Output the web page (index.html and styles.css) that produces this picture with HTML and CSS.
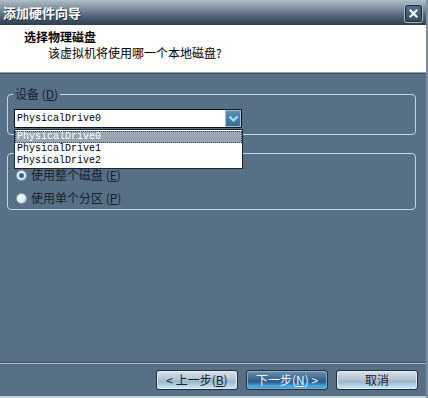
FILE: index.html
```html
<!DOCTYPE html>
<html lang="zh-CN">
<head>
<meta charset="utf-8">
<title>添加硬件向导</title>
<link rel="stylesheet" href="styles.css">
</head>
<body>
<div class="window">
  <div class="titlebar">
    <span class="title">添加硬件向导</span>
    <span class="close">
      <svg width="11" height="11" viewBox="0 0 11 11"><path d="M2.5 2.5 L8.5 8.5 M8.5 2.5 L2.5 8.5" stroke="#ffffff" stroke-width="2.2" stroke-linecap="square"/></svg>
    </span>
  </div>
  <div class="header">
    <div class="h-title">选择物理磁盘</div>
    <div class="h-sub">该虚拟机将使用哪一个本地磁盘?</div>
  </div>
  <div class="content">
    <fieldset class="group group-device">
      <legend class="legend">设备 (<u>D</u>)</legend>
      <div class="combo">
        <span class="combo-text">PhysicalDrive0</span>
        <span class="combo-btn">
          <svg width="13" height="13" viewBox="0 0 13 13"><path d="M2.5 4.5 L6.5 8.5 L10.5 4.5" fill="none" stroke="#9fe4ff" stroke-width="2.2"/></svg>
        </span>
        <ul class="dropdown">
          <li class="item selected">PhysicalDrive0</li>
          <li class="item">PhysicalDrive1</li>
          <li class="item">PhysicalDrive2</li>
        </ul>
      </div>
    </fieldset>
    <fieldset class="group group-part">
      <div class="radio-row"><span class="radio checked"></span><span class="radio-label">使用整个磁盘 (<u>E</u>)</span></div>
      <div class="radio-row"><span class="radio"></span><span class="radio-label">使用单个分区 (<u>P</u>)</span></div>
    </fieldset>
  </div>
  <div class="footer">
    <button class="btn">&lt; 上一步(<u>B</u>)</button>
    <button class="btn btn-default">下一步(<u>N</u>) &gt;</button>
    <button class="btn">取消</button>
  </div>
</div>
</body>
</html>
```
FILE: styles.css
```css
html, body {
  margin: 0;
  padding: 0;
}
body {
  width: 428px;
  height: 398px;
  overflow: hidden;
  font-family: "Noto Sans CJK SC", "Liberation Sans", sans-serif;
  font-size: 12px;
  color: #15202c;
}
.window {
  width: 428px;
  height: 398px;
  display: flex;
  flex-direction: column;
  background: #587086;
  box-sizing: border-box;
  border-right: 2px solid #7e8e9c;
}
.titlebar {
  height: 25px;
  flex: none;
  display: flex;
  align-items: center;
  justify-content: space-between;
  padding: 0 3px 0 3px;
  background: linear-gradient(#b3bec7 0%, #8b9cab 25%, #5d7183 55%, #3a4d5e 85%, #2e3f4f 100%);
}
.title {
  font-size: 13px;
  font-weight: bold;
  color: #ffffff;
  line-height: 16px;
  text-shadow: 1px 1px 0 #24323f;
}
.close {
  width: 17px;
  height: 17px;
  margin-top: 1px;
  display: flex;
  align-items: center;
  justify-content: center;
  border: 1px solid #a9bccb;
  border-radius: 3px;
  background: linear-gradient(#5a7286, #34495c);
  box-shadow: inset 0 0 0 1px #1c2b38;
}
.header {
  height: 47px;
  flex: none;
  background: #ffffff;
  border-bottom: 1px solid #9aa6b0;
  box-shadow: 0 1px 0 #3b4f61;
  margin-bottom: 1px;
  color: #000;
}
.h-title {
  font-weight: bold;
  padding: 4px 0 0 24px;
  line-height: 16px;
}
.h-sub {
  padding: 0 0 0 48px;
  line-height: 16px;
}
.content {
  flex: 1;
  padding: 13px 10px 0 7px;
}
.group {
  margin: 0;
  border: 1px solid #bcd8ef;
  border-radius: 4px;
  min-width: 0;
}
.group-device {
  padding: 8px 6px 6px 6px;
}
.legend {
  padding: 0 2px;
  margin-left: -1px;
  line-height: 14px;
  color: #15202c;
}
.combo {
  position: relative;
  width: 228px;
  height: 19px;
  box-sizing: border-box;
  border: 1px solid #0c1620;
  background: #ffffff;
  display: flex;
  align-items: center;
  justify-content: space-between;
}
.combo-text {
  font-family: "Liberation Mono", monospace;
  font-size: 10px;
  color: #000;
  padding-left: 2px;
}
.combo-btn {
  width: 16px;
  height: 17px;
  box-sizing: border-box;
  border: 1px solid #9cc3de;
  background: linear-gradient(#5e8eb4, #3d6a92);
  display: flex;
  align-items: center;
  justify-content: center;
}
.dropdown {
  position: absolute;
  top: 19px;
  left: -1px;
  width: 229px;
  margin: 0;
  padding: 1px 0;
  list-style: none;
  background: #ffffff;
  border: 1px solid #1c2632;
  box-sizing: border-box;
}
.item {
  height: 12px;
  line-height: 12px;
  font-family: "Liberation Mono", monospace;
  font-size: 10px;
  color: #000;
  padding-left: 2px;
}
.item.selected {
  background: #98a6b4;
  color: #ffffff;
  outline: 1px dotted #3b4652;
  outline-offset: -1px;
}
.group-part {
  margin-top: 18px;
  padding: 11px 6px 1px 8px;
  display: flex;
  flex-direction: column;
  gap: 3px;
}
.radio-row {
  height: 20px;
  display: flex;
  align-items: center;
  gap: 4px;
}
.radio {
  width: 11px;
  height: 11px;
  border-radius: 50%;
  box-sizing: border-box;
  border: 1px solid #8eaac0;
  background: radial-gradient(circle at 40% 40%, #ffffff 0%, #e2ebf2 55%, #a9bccb 100%);
  display: flex;
  align-items: center;
  justify-content: center;
}
.radio.checked::after {
  content: "";
  width: 5px;
  height: 5px;
  border-radius: 50%;
  background: #2e6a9c;
}
.radio-label {
  color: #15202c;
  line-height: 16px;
}
.footer {
  height: 35px;
  flex: none;
  box-sizing: border-box;
  border-top: 1px solid #a6bccd;
  box-shadow: 0 -1px 0 #405568;
  border-bottom: 2px solid #c4d2dc;
  display: flex;
  justify-content: flex-end;
  align-items: flex-start;
  gap: 8px;
  padding: 6px 8px 0 0;
}
.btn {
  width: 82px;
  height: 20px;
  box-sizing: border-box;
  border: 1px solid #1e2e3c;
  border-radius: 3px;
  padding: 0;
  font-family: "Noto Sans CJK SC", "Liberation Sans", sans-serif;
  font-size: 12px;
  line-height: 16px;
  color: #15202c;
  background: linear-gradient(#d6e2ea 0%, #b4c6d4 45%, #9fb6c8 60%, #bfe2f4 90%, #a9c6d8 100%);
  box-shadow: inset 0 0 0 1px #e6eef4;
}
.btn-default {
  color: #e8f4ff;
  background: linear-gradient(#6d90b0 0%, #3c6690 45%, #2f5a86 60%, #4ab6ee 88%, #2c6a9c 100%);
  box-shadow: inset 0 0 0 1px #8cb0cc;
}
u {
  text-decoration: underline;
}
```
